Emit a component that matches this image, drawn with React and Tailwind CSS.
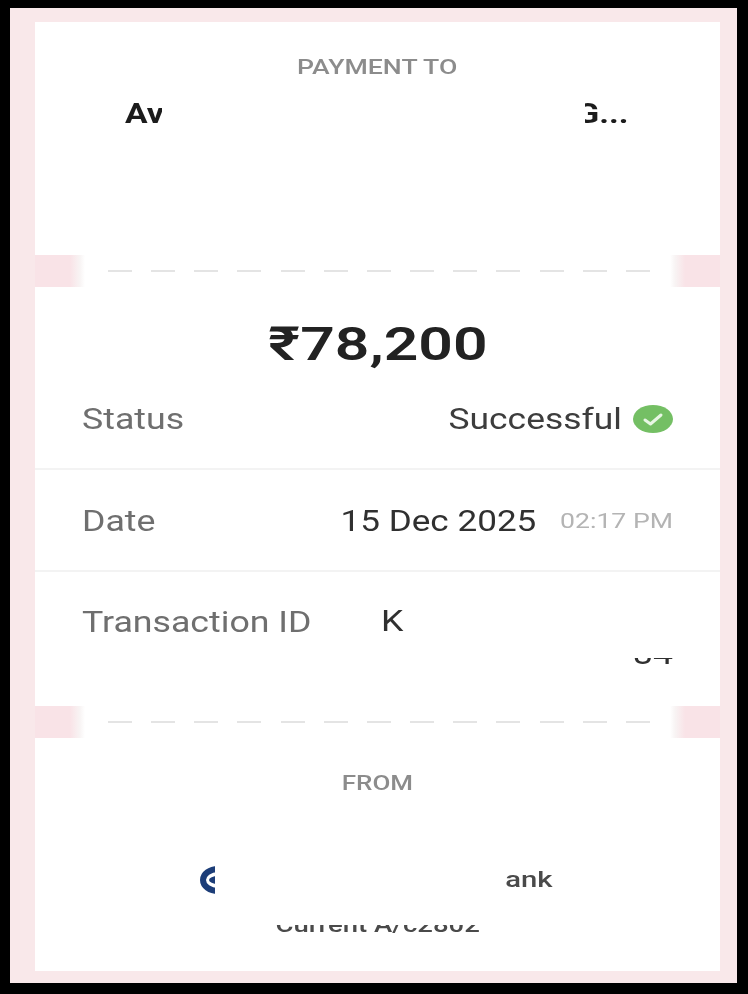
function Strip() {
  return (
    <div className="flex h-[32px] items-center bg-white">
      <div className="h-full w-[50px] bg-[linear-gradient(to_right,#f9e3e7_70%,#f8f4f4_90%,#ffffff)] blur-[0.5px]" />
      <div className="ml-[23px] flex flex-1 justify-between">
        {Array.from({ length: 13 }).map((_, i) => (
          <div key={i} className="h-[2px] w-[24px] bg-[#e4e4e4] blur-[0.4px]" />
        ))}
      </div>
      <div className="ml-[20px] h-full w-[50px] bg-[linear-gradient(to_left,#f9e3e7_70%,#f8f4f4_90%,#ffffff)] blur-[0.5px]" />
    </div>
  );
}

function Row({ label, children, className }) {
  return (
    <div className={`flex items-center justify-between border-b-2 border-[#f3f3f3] pl-[47px] pr-[47px] ${className}`}>
      <span className="inline-block origin-left scale-x-[1.19] text-[30px] leading-[32px] text-[#6f6f6f] blur-[0.4px]">{label}</span>
      {children}
    </div>
  );
}

export default function App() {
  return (
    <div className="h-[994px] w-[748px] bg-black pb-[11px] pl-[10px] pr-[11px] pt-[8px] font-['Roboto',sans-serif]">
      <div className="h-full bg-[#f9e8ea] pb-[12px] pl-[25px] pr-[17px] pt-[14px]">
        <div className="flex h-full flex-col bg-white">
          <section className="relative h-[233px] pt-[32px]">
            <p className="text-center text-[21px] font-medium leading-[26px] text-[#8c8c8c] blur-[0.4px]">
              <span className="inline-block origin-center scale-x-[1.27]">PAYMENT TO</span>
            </p>
            <div className="mt-[17px] flex justify-between pl-[90px] pr-[92px] text-[28px] font-bold leading-[33px] text-[#1c1c1c] blur-[0.3px]">
              <span className="inline-block origin-left scale-x-[1.2]">Av</span>
              <span className="inline-block origin-right scale-x-[1.2]">G...</span>
            </div>
            <div className="absolute left-[127px] top-[74px] h-[40px] w-[423px] bg-white" />
          </section>

          <Strip />

          <section className="flex flex-1 flex-col">
            <p className="pt-[31px] text-center text-[47px] font-semibold leading-[52px] text-[#222222] blur-[0.4px]">
              <span className="inline-block origin-center scale-x-[1.29]">₹78,200</span>
            </p>
            <Row label="Status" className="h-[100px]">
              <div className="flex items-center gap-[11px]">
                <span className="inline-block origin-right scale-x-[1.18] text-[30px] leading-[32px] text-[#3d3d3d] blur-[0.4px]">Successful</span>
                <svg width="40" height="28" viewBox="0 0 40 28">
                  <ellipse cx="20" cy="14" rx="20" ry="14" fill="#74bf64" />
                  <path d="M12 15l5.5 4L28 10" fill="none" stroke="#e8f6e4" strokeWidth="3" strokeLinecap="round" strokeLinejoin="round" />
                </svg>
              </div>
            </Row>
            <Row label="Date" className="h-[102px] pt-[2px]">
              <div className="flex items-center gap-[48px]">
                <span className="inline-block origin-right scale-x-[1.17] text-[30px] leading-[32px] text-[#303030] blur-[0.3px]">15 Dec 2025</span>
                <span className="inline-block origin-right scale-x-[1.27] text-[21px] leading-[26px] text-[#b4b4b4] blur-[0.4px]">02:17 PM</span>
              </div>
            </Row>
            <div className="relative flex flex-1 justify-between pl-[47px] pr-[47px] pt-[34px]">
              <span className="inline-block origin-left scale-x-[1.19] text-[30px] leading-[32px] text-[#6f6f6f] blur-[0.4px]">Transaction ID</span>
              <div className="-mt-[2px] flex w-[292px] flex-col text-[30px] leading-[33px] text-[#303030]">
                <span className="inline-block origin-left scale-x-[1.19]">K</span>
                <span className="inline-block origin-right scale-x-[1.19] text-right">84</span>
              </div>
              <div className="absolute left-[370px] top-[32px] h-[54px] w-[275px] bg-white" />
            </div>
          </section>

          <Strip />

          <section className="relative h-[233px]">
            <p className="pt-[32px] text-center text-[20px] font-medium leading-[26px] text-[#8c8c8c] blur-[0.4px]">
              <span className="inline-block origin-center scale-x-[1.3]">FROM</span>
            </p>
            <div className="mt-[69px] flex items-center justify-between pl-[165px] pr-[167px]">
              <svg width="40" height="30" viewBox="0 0 40 30">
                <ellipse cx="18" cy="15" rx="15" ry="11" fill="none" stroke="#1c3d78" strokeWidth="6" />
                <ellipse cx="18" cy="15" rx="9" ry="4" fill="#1c3d78" />
              </svg>
              <span className="inline-block origin-right scale-x-[1.33] text-[22px] font-medium leading-[28px] text-[#4a4a4a] blur-[0.3px]">ank</span>
            </div>
            <p className="mt-[16px] text-center text-[22px] font-medium leading-[28px] text-[#4a4a4a] blur-[0.3px]">
              <span className="inline-block origin-center scale-x-[1.25]">Current A/c2802</span>
            </p>
            <div className="absolute left-[180px] top-[105px] h-[77px] w-[285px] bg-white" />
            <div className="absolute left-[180px] top-[157px] h-[30px] w-[340px] bg-white" />
          </section>
        </div>
      </div>
    </div>
  );
}
